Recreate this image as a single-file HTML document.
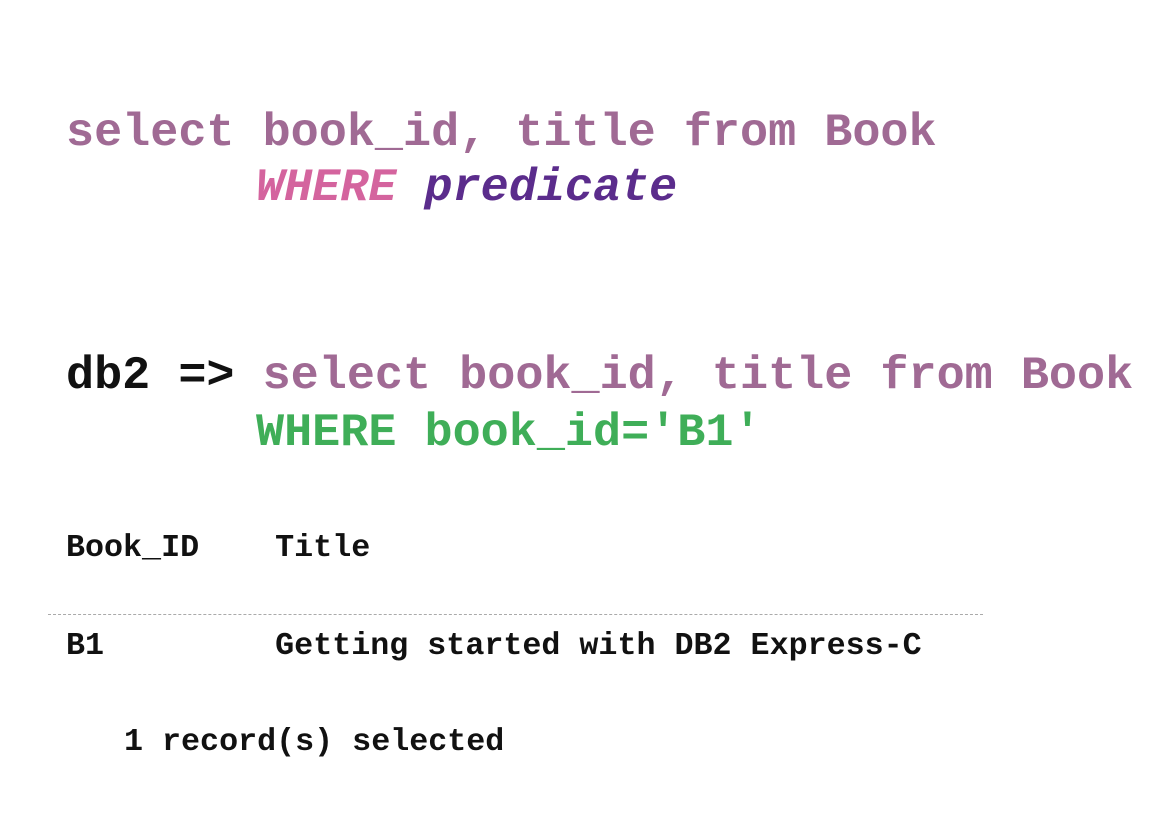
<!DOCTYPE html>
<html><head><meta charset="utf-8"><style>
html,body{margin:0;padding:0;background:#fff;width:1158px;height:826px;overflow:hidden;position:relative}
.t{position:absolute;font-family:"Liberation Mono",monospace;font-weight:bold;white-space:pre;line-height:1}
.big{font-size:46.8px}
.sm{font-size:31.7px;color:#111}
.m{color:#a06a94}
</style></head><body>
<div class="t big m" style="left:66px;top:111px">select book_id, title from Book</div>
<div class="t big" style="left:256px;top:166px;font-style:italic"><span style="color:#d4649e">WHERE</span> <span style="color:#5b2c8c">predicate</span></div>
<div class="t big" style="left:66px;top:354px"><span style="color:#111">db2 =&gt;</span> <span class="m">select book_id, title from Book</span></div>
<div class="t big" style="left:256px;top:411px;color:#3fae58">WHERE book_id='B1'</div>
<div class="t sm" style="left:66px;top:533px">Book_ID    Title</div>
<div style="position:absolute;left:48px;top:614px;width:935px;border-top:1.5px dashed #aaa"></div>
<div class="t sm" style="left:66px;top:631px">B1         Getting started with DB2 Express-C</div>
<div class="t sm" style="left:124px;top:727px">1 record(s) selected</div>
</body></html>
